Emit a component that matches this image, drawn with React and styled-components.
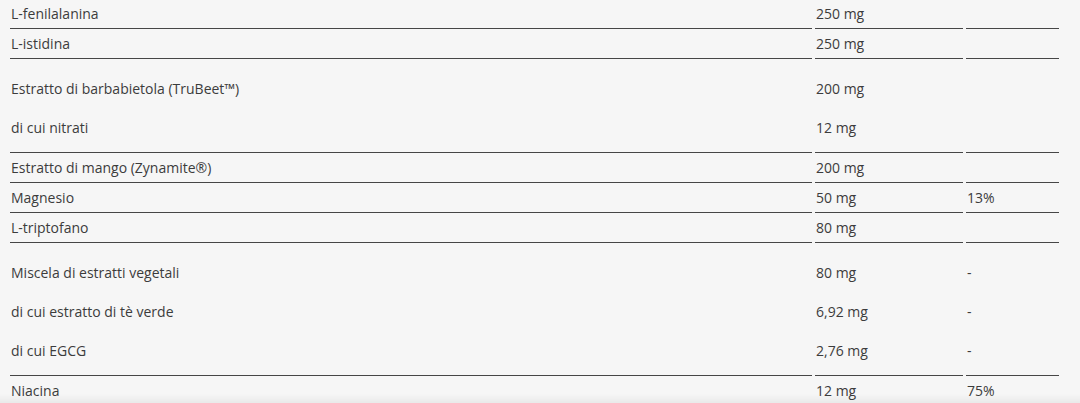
import React from "react";
import styled, { createGlobalStyle } from "styled-components";

const GlobalStyle = createGlobalStyle`
  html, body {
    margin: 0;
    padding: 0;
    background: #f6f6f6;
  }
  body {
    font-family: "Open Sans", "Liberation Sans", sans-serif;
    color: #3c3c3c;
  }
`;

const PageStyled = styled.div`
  padding: 0 0 0 7px;
  margin-top: -1px;
`;

const TableStyled = styled.table`
  width: 1055px;
  border-collapse: separate;
  border-spacing: 3px 0;
  table-layout: fixed;
  font-size: 14px;
`;

const ColStyled = styled.col`
  width: ${({ $w }) => $w}px;
`;

const CellStyled = styled.td`
  padding: ${({ $group }) => ($group ? "10px 0 5px 1px" : "0 0 0 1px")};
  height: ${({ $group }) => ($group ? "auto" : "29px")};
  vertical-align: middle;
  border-bottom: ${({ $open }) => ($open ? "none" : "1px solid #464646")};
  white-space: nowrap;
`;

const LineStyled = styled.div`
  height: 39px;
  line-height: 39px;
`;

const ShadeStyled = styled.div`
  position: fixed;
  left: 0;
  right: 0;
  bottom: 0;
  height: 9px;
  background: linear-gradient(to bottom, rgba(0, 0, 0, 0), rgba(0, 0, 0, 0.05));
  pointer-events: none;
`;

const rows = [
  { cells: [["L-fenilalanina"], ["250 mg"], [""]] },
  { cells: [["L-istidina"], ["250 mg"], [""]] },
  {
    group: true,
    cells: [
      ["Estratto di barbabietola (TruBeet™)", "di cui nitrati"],
      ["200 mg", "12 mg"],
      ["", ""],
    ],
  },
  { cells: [["Estratto di mango (Zynamite®)"], ["200 mg"], [""]] },
  { cells: [["Magnesio"], ["50 mg"], ["13%"]] },
  { cells: [["L-triptofano"], ["80 mg"], [""]] },
  {
    group: true,
    cells: [
      [
        "Miscela di estratti vegetali",
        "di cui estratto di tè verde",
        "di cui EGCG",
      ],
      ["80 mg", "6,92 mg", "2,76 mg"],
      ["-", "-", "-"],
    ],
  },
  { open: true, cells: [["Niacina"], ["12 mg"], ["75%"]] },
];

const App = () => {
  return (
    <PageStyled>
      <GlobalStyle />
      <TableStyled>
        <colgroup>
          <ColStyled $w={802} />
          <ColStyled $w={148} />
          <ColStyled $w={93} />
        </colgroup>
        <tbody>
          {rows.map((row, i) => (
            <tr key={i}>
              {row.cells.map((lines, j) => (
                <CellStyled key={j} $group={row.group} $open={row.open}>
                  {row.group
                    ? lines.map((text, k) => (
                        <LineStyled key={k}>{text}</LineStyled>
                      ))
                    : lines[0]}
                </CellStyled>
              ))}
            </tr>
          ))}
        </tbody>
      </TableStyled>
      <ShadeStyled />
    </PageStyled>
  );
};

export default App;
